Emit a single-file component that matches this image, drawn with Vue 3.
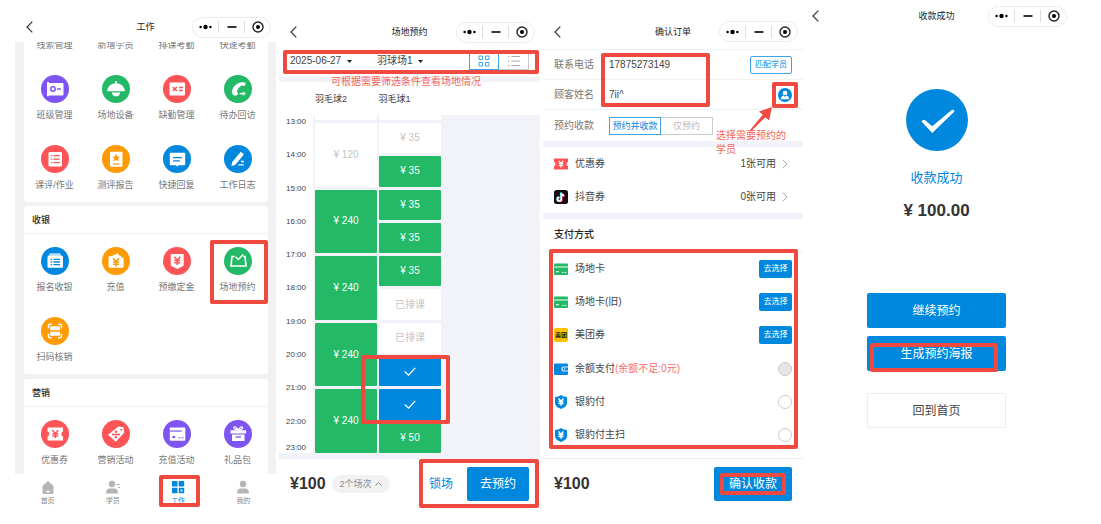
<script setup>
import { h, ref } from 'vue'

const paint = {
  purple: '#7e55f3',
  green: '#23b966',
  red: '#fd5458',
  orange: '#fe9a02',
  blue: '#0088de'
}

const yen = (x, y, c, w = 1.4) =>
  `<path d="M${x - 3} ${y - 4}l3 3.6l3-3.6M${x - 3} ${y - 0.2}h6M${x - 3} ${y + 2}h6M${x} ${y - 0.4}v4.6" fill="none" stroke="${c}" stroke-width="${w}"/>`

const glyphs = {
  classes: `<path d="M6 7h2v1h13.500q1 0 1 1v10.500q0 1-1 1H8v.8H6z" fill="#fff"/><circle cx="12" cy="14" r="2.200" fill="none" stroke="#7e55f3" stroke-width="1.500"/><path d="M16 14h4" stroke="#7e55f3" stroke-width="1.500"/>`,
  venue: `<path d="M13.300 6h1.400v2.200c4.500.4 7.300 3.200 8.300 7.400q0 .7-.8.7H5.800q-.8 0-.8-.7c1-4.200 3.800-7 8.300-7.400z" fill="#fff"/><path d="M10 17.400h8q-.3 3.900-4 3.900t-4-3.900z" fill="#fff"/>`,
  absence: `<rect x="6.500" y="7.500" width="15.500" height="13" rx="1" fill="#fff"/><path d="M9.800 12l4 4M13.800 12l-4 4M16 12.500h3.800M16 15.500h3.800" stroke="#fd5458" stroke-width="1.500"/>`,
  phone: `<path d="M17.300 7.200l4 .3q.9 1.800-.7 3.400l-3-.3q-3.600 2-4.600 5.600l1.200 2.600q-1.600 2.400-4.200 1.800-2-.8-2.200-3.800c.8-5 4.400-8.600 9.500-9.600z" fill="#fff"/><path d="M15.500 18.600h4" stroke="#fff" stroke-width="1.400"/><path d="M18.800 16.400l3.200 2.200-3.200 2.200z" fill="#fff"/>`,
  lesson: `<rect x="7.500" y="7" width="13.500" height="14.500" rx="1.300" fill="#fff"/><path d="M9.800 10.700h1.500M12.500 10.700h6.300M9.800 14.200h1.500M12.500 14.200h6.300M9.800 17.700h1.500M12.500 17.700h6.300" stroke="#fd5458" stroke-width="1.300"/>`,
  report: `<rect x="8" y="6.700" width="12.500" height="15" rx="1.300" fill="#fff"/><path d="M14.200 8.800l1.200 2.600 2.700.3-2 1.900.5 2.700-2.400-1.300-2.400 1.300.5-2.700-2-1.900 2.700-.3z" fill="#fe9a02"/><path d="M11.300 19h6" stroke="#fe9a02" stroke-width="1.300"/>`,
  reply: `<path d="M7.700 7.800h13.600q.9 0 .9.900v10.600q0 .9-.9.900h-5.500L14.300 21.500 12.800 20.200H7.700q-.9 0-.9-.9V8.700q0-.9.900-.9z" fill="#fff"/><path d="M10 12.700h9M10 15.800h7" stroke="#0088de" stroke-width="1.300"/>`,
  diary: `<path d="M16.800 6.800l3.200 2.400-8.600 10.600-4 1.500.8-4.200z" fill="#fff"/><path d="M17 16.500h2.800M14.300 19.800h5.500" stroke="#fff" stroke-width="1.300"/>`,
  cashier: `<path d="M8.500 7.200h11M7.500 9h13" stroke="#fff" stroke-width="1.300"/><rect x="6.500" y="9" width="15.500" height="11.800" rx="1" fill="#fff"/><path d="M9.700 12.300h1.500M12.500 12.300h6.500M9.700 15h1.500M12.500 15h6.500M9.700 17.700h1.500M12.500 17.700h6.500" stroke="#0088de" stroke-width="1.300"/>`,
  topup: `<path d="M6.500 9.500L10 9l5.500-2.800 2 2.600h1.500l.6 1.800h1q1 0 1 1v8.200q0 1-1 1H7.500q-1 0-1-1z" fill="#fff"/>${yen(14, 15.2, '#fe9a02')}`,
  deposit: `<path d="M8.500 7h11.500q.7 0 .7.700v11L14.300 22l-6.500-3.300v-11q0-.7.700-.7z" fill="#fff"/>${yen(14.300, 13.700, '#fd5458')}`,
  booking: `<path d="M10.800 9.500H8L7 19h15L21 9.500h-1.800" fill="none" stroke="#fff" stroke-width="1.700"/><path d="M11.600 9.800l2.700 2.700 4.900-5" fill="none" stroke="#fff" stroke-width="1.400"/>`,
  scan: `<path d="M11.300 7.300H9.300q-1.300 0-1.300 1.300v2.700M17.700 7.300h2q1.300 0 1.300 1.300v2.700M11.300 20.700H9.300q-1.300 0-1.300-1.300v-2.700M17.700 20.700h2q1.300 0 1.300-1.300v-2.700" fill="none" stroke="#fff" stroke-width="1.500" transform="translate(-.5 0)"/><path d="M9.200 9.300h9.800v4H9.200zM9.200 14.700h9.800v4H9.200z" fill="#fff"/>`,
  coupon: `<path d="M6.500 7.500H22v4q-1.700.3-1.700 2.500t1.700 2.500v4H6.500v-4Q8.200 16.200 8.200 14t-1.700-2.500z" fill="#fff"/>${yen(14.300, 14, '#fd5458')}`,
  promo: `<path d="M16.500 6.500l5 .7.700 5.500-8.500 9-7.700-7z" fill="#fff"/><circle cx="19.300" cy="9.700" r="1" fill="#fd5458"/><path d="M10 14.500h8" stroke="#fd5458" stroke-width="1.600"/><circle cx="14" cy="11.700" r="1.200" fill="#fd5458"/><circle cx="14" cy="17.300" r="1.200" fill="#fd5458"/>`,
  card: `<rect x="6.800" y="7.500" width="15.500" height="13.300" rx="1" fill="#fff"/><path d="M6.800 11h12" stroke="#7e55f3" stroke-width="1.200"/><path d="M9 18l.8-2h2.800l-.8 2z" fill="#7e55f3"/><path d="M15.500 17.800h1.900M18.600 17.800h1.800" stroke="#7e55f3"/>`,
  gift: `<path d="M6.500 10.300H22v3.300H6.500zM8 14.600h12.500v6.400H8z" fill="#fff"/><path d="M14.200 10q-4.500-.3-4.300-2.400.7-2.300 4.300 2.400 3.600-4.700 4.300-2.400.2 2.100-4.300 2.400z" fill="none" stroke="#fff" stroke-width="1.300"/><path d="M11.500 17h5.500" stroke="#7e55f3" stroke-width="1.300"/>`
}

const training = [
  { name: '线索管理', icon: 'classes', color: 'purple' },
  { name: '新增学员', icon: 'venue', color: 'green' },
  { name: '排课考勤', icon: 'absence', color: 'red' },
  { name: '快速考勤', icon: 'phone', color: 'green' },
  { name: '班级管理', icon: 'classes', color: 'purple' },
  { name: '场地设备', icon: 'venue', color: 'green' },
  { name: '缺勤管理', icon: 'absence', color: 'red' },
  { name: '待办回访', icon: 'phone', color: 'green' },
  { name: '课评/作业', icon: 'lesson', color: 'red' },
  { name: '测评报告', icon: 'report', color: 'orange' },
  { name: '快捷回复', icon: 'reply', color: 'blue' },
  { name: '工作日志', icon: 'diary', color: 'blue' }
]
const cashier = [
  { name: '报名收银', icon: 'cashier', color: 'blue' },
  { name: '充值', icon: 'topup', color: 'orange' },
  { name: '预缴定金', icon: 'deposit', color: 'red' },
  { name: '场地预约', icon: 'booking', color: 'green', marked: true },
  { name: '扫码核销', icon: 'scan', color: 'orange' }
]
const marketing = [
  { name: '优惠券', icon: 'coupon', color: 'red' },
  { name: '营销活动', icon: 'promo', color: 'red' },
  { name: '充值活动', icon: 'card', color: 'purple' },
  { name: '礼品包', icon: 'gift', color: 'purple' }
]
const sections = [
  { title: '', items: training },
  { title: '收银', items: cashier },
  { title: '营销', items: marketing }
]

const tabs = [
  { name: '首页', art: '<path d="M1.500 6L7 1l5.500 5v7q0 1-1 1h-9q-1 0-1-1z" fill="#b5b5b5"/><path d="M5 11.500h4" stroke="#fff" stroke-width="1.300"/>' },
  { name: '学员', art: '<circle cx="6" cy="4" r="3.200" fill="#b5b5b5"/><path d="M0 13.500q0-5 4-5h4q4 0 4 5z" fill="#b5b5b5"/><path d="M10.500 4.500h3.500M12 7.500h2" stroke="#b5b5b5" stroke-width="1.200"/>' },
  { name: '工作', active: true, art: '<path d="M1 1h5.500v5.500H1zM7.700 1h5.500v5.500H7.700zM1 7.700h5.500v5.500H1z" fill="#0088de"/><rect x="8.700" y="8.700" width="3.600" height="3.600" fill="none" stroke="#0088de" stroke-width="1.800"/>' },
  { name: '我的', art: '<circle cx="7" cy="4" r="3.200" fill="#b5b5b5"/><path d="M1 13.500q0-5 4-5h4q4 0 4 5z" fill="#b5b5b5"/>' }
]

const hours = ['13:00', '14:00', '15:00', '16:00', '17:00', '18:00', '19:00', '20:00', '21:00', '22:00', '23:00']
const courtA = [
  { text: '¥ 120', kind: 'free' },
  { text: '¥ 240', kind: 'open' },
  { text: '¥ 240', kind: 'open' },
  { text: '¥ 240', kind: 'open' },
  { text: '¥ 240', kind: 'open' }
]
const courtB = [
  { text: '¥ 35', kind: 'free' },
  { text: '¥ 35', kind: 'open' },
  { text: '¥ 35', kind: 'open' },
  { text: '¥ 35', kind: 'open' },
  { text: '¥ 35', kind: 'open' },
  { text: '已排课', kind: 'free' },
  { text: '已排课', kind: 'free' },
  { text: '', kind: 'picked', first: true },
  { text: '', kind: 'picked' },
  { text: '¥ 50', kind: 'open' }
]

const cardArt = '<rect y="1.500" width="14" height="11.500" rx="1" fill="#23b966"/><path d="M0 5h14" stroke="#fff"/><path d="M2 9.700h3M8 10.500h1.600M10.600 10.500h1.800" stroke="#d5f5e3" stroke-width="1.200"/>'
const shieldArt = '<path d="M7 0q2.500 1.800 6 2v6q0 3.800-6 6-6-2.200-6-6V2q3.500-.2 6-2z" fill="#0088de"/><path d="M4.500 3.500L7 6.300l2.500-2.800M4.500 6.500h5M4.500 8.500h5M7 6.300v4.500" fill="none" stroke="#fff" stroke-width="1.300"/>'
const vouchers = [
  { name: '优惠券', count: '1张可用', art: '<path d="M0 1.500h14V5q-1.500.2-1.500 2T14 9v3.500H0V9q1.500-.2 1.500-2T0 5z" fill="#fd5458"/><path d="M4.800 4L7 6.500 9.200 4M4.800 6.700h4.400M4.800 8.500h4.400M7 6.500v4" fill="none" stroke="#fff" stroke-width="1.200"/>' },
  { name: '抖音券', count: '0张可用', art: '<rect width="14" height="14" rx="2.500" fill="#170b1a"/><path d="M7.200 2.800v6.400a1.900 1.900 0 1 1-1.900-1.900M7.200 3q.4 2.300 2.900 2.600" transform="translate(-.5 -.3)" fill="none" stroke="#25f4ee" stroke-width="1.500"/><path d="M7.500 2.800v6.400a1.900 1.900 0 1 1-1.900-1.900M7.500 3q.4 2.300 2.900 2.600" transform="translate(.5 .4)" fill="none" stroke="#fe2c55" stroke-width="1.500"/><path d="M7.300 2.800v6.400a1.900 1.900 0 1 1-1.900-1.900M7.300 3q.4 2.300 2.900 2.600" fill="none" stroke="#fff" stroke-width="1.500"/>' }
]
const payments = [
  { name: '场地卡', pick: true, art: cardArt },
  { name: '场地卡(旧)', pick: true, art: cardArt },
  { name: '美团券', pick: true, brand: '美团' },
  { name: '余额支付', note: '(余额不足:0元)', disabled: true, art: '<rect y="1.500" width="14" height="11.500" rx="1" fill="#0088de"/><path d="M14 5h-4q-2 0-2 2t2 2h4" fill="none" stroke="#d8efff" stroke-width="1.200"/><circle cx="10.700" cy="7" r=".7" fill="#fff"/>' },
  { name: '银豹付', art: shieldArt },
  { name: '银豹付主扫', art: shieldArt }
]

const phone = ref('17875273149')
const customer = ref('7ii^')

const TopBar = (props) =>
  h('header', { class: 'top' }, [
    h('button', { class: 'back', 'aria-label': '返回' }, [
      h('svg', { viewBox: '0 0 7 12', width: 7, height: 12, innerHTML: '<path d="M6.300.7L1 6l5.300 5.300" fill="none" stroke="#333" stroke-width="1.200"/>' })
    ]),
    h('h2', props.title),
    h('div', { class: 'capsule' }, [
      h('button', { 'aria-label': '更多' }, [
        h('svg', { viewBox: '0 0 13 12', width: 13, height: 12, innerHTML: '<circle cx="1.600" cy="6" r="1.200"/><circle cx="6.500" cy="6" r="2.200"/><circle cx="11.400" cy="6" r="1.200"/>' })
      ]),
      h('button', { 'aria-label': '最小化' }, [
        h('svg', { viewBox: '0 0 12 12', width: 12, height: 12, innerHTML: '<path d="M1.500 6h9" stroke="#111" stroke-width="1.700"/>' })
      ]),
      h('button', { 'aria-label': '关闭' }, [
        h('svg', { viewBox: '0 0 12 12', width: 12, height: 12, innerHTML: '<circle cx="6" cy="6" r="5" fill="none" stroke="#222" stroke-width="1.400"/><circle cx="6" cy="6" r="2"/>' })
      ])
    ])
  ])
TopBar.props = ['title']
</script>

<template>
  <main class="board">
    <section class="phone work">
      <TopBar title="工作" />
      <div class="scroll">
        <article v-for="s in sections" :key="s.title" class="card" :class="{ scrolled: !s.title }">
          <h3 v-if="s.title">{{ s.title }}</h3>
          <div class="apps">
            <button v-for="a in s.items" :key="a.name" class="app">
              <svg width="28" height="28" viewBox="0 0 28 28" aria-hidden="true">
                <circle cx="14" cy="14" r="14" :fill="paint[a.color]" />
                <g v-html="glyphs[a.icon]"></g>
              </svg>
              <span>{{ a.name }}</span>
              <i v-if="a.marked" class="mark app-mark"></i>
            </button>
          </div>
        </article>
      </div>
      <nav class="tabs">
        <a v-for="t in tabs" :key="t.name" href="#" :class="{ active: t.active }">
          <svg width="14" height="14" viewBox="0 0 14 14" aria-hidden="true" v-html="t.art"></svg>
          <span>{{ t.name }}</span>
          <i v-if="t.active" class="mark tab-mark"></i>
        </a>
      </nav>
    </section>

    <section class="phone venue">
      <TopBar title="场地预约" />
      <div class="filters">
        <label class="pick">
          <select aria-label="日期"><option>2025-06-27</option></select>
          <svg width="5" height="3" viewBox="0 0 5 3"><path d="M0 0h5L2.500 3z" fill="#222" /></svg>
        </label>
        <label class="pick">
          <select aria-label="场地"><option>羽球场1</option></select>
          <svg width="5" height="3" viewBox="0 0 5 3"><path d="M0 0h5L2.500 3z" fill="#222" /></svg>
        </label>
        <div class="views">
          <button class="on" aria-label="宫格">
            <svg width="12" height="12" viewBox="0 0 12 12"><path d="M1 1h3.500v3.500H1zM7.500 1H11v3.500H7.500zM1 7.500h3.500V11H1zM7.500 7.500H11V11H7.500z" fill="none" stroke="#3ea4e6" /></svg>
          </button>
          <button aria-label="列表">
            <svg width="12" height="12" viewBox="0 0 12 12"><path d="M0 1.500h1.500M3.500 1.500H12M0 6h1.500M3.500 6H12M0 10.500h1.500M3.500 10.500H12" stroke="#aaa" /></svg>
          </button>
        </div>
        <i class="mark filter-mark"></i>
        <p class="hint filter-hint">可根据需要筛选条件查看场地情况</p>
      </div>
      <div class="courts"><span>羽毛球2</span><span>羽毛球1</span></div>
      <div class="schedule">
        <div class="hours"><time v-for="t in hours" :key="t">{{ t }}</time></div>
        <div class="lane wide">
          <span class="slot"></span>
          <button v-for="(s, i) in courtA" :key="i" class="slot" :class="s.kind">{{ s.text }}</button>
        </div>
        <div class="lane">
          <span class="slot"></span>
          <button v-for="(s, i) in courtB" :key="i" class="slot" :class="s.kind">
            <svg v-if="s.kind === 'picked'" width="12" height="9" viewBox="0 0 12 9" aria-label="已选"><path d="M.7 4.500l3.800 3.700L11.300.8" fill="none" stroke="#fff" stroke-width="1.200" /></svg>
            <template v-else>{{ s.text }}</template>
            <i v-if="s.first" class="mark slot-mark"></i>
          </button>
        </div>
      </div>
      <footer class="pay">
        <strong>¥100</strong>
        <button class="pill">2个场次
          <svg width="7" height="4" viewBox="0 0 7 4"><path d="M.5 3.500l3-3 3 3" fill="none" stroke="#888" /></svg>
        </button>
        <div class="actions">
          <button class="text">锁场</button>
          <button class="solid">去预约</button>
          <i class="mark action-mark"></i>
        </div>
      </footer>
    </section>

    <section class="phone order">
      <TopBar title="确认订单" />
      <form class="form" @submit.prevent>
        <div class="field">
          <label for="tel">联系电话</label>
          <input id="tel" v-model="phone" />
          <button class="outline">匹配学员</button>
        </div>
        <div class="field">
          <label for="who">顾客姓名</label>
          <input id="who" v-model="customer" />
          <button class="person" aria-label="选择学员">
            <svg width="14" height="14" viewBox="0 0 14 14"><circle cx="7" cy="7" r="7" fill="#0088de" /><circle cx="7" cy="5" r="2.300" fill="#fff" /><path d="M2.800 11.200q.2-3.200 2.900-3.700L7 9l1.300-1.500q2.700.5 2.900 3.700z" fill="#fff" /></svg>
            <i class="mark person-mark"></i>
          </button>
        </div>
        <div class="field mode-field">
          <span id="mode" class="caption">预约收款</span>
          <div class="modes" role="group" aria-labelledby="mode"><button class="on">预约并收款</button><button>仅预约</button></div>
        </div>
        <i class="mark form-mark"></i>
        <svg class="arrow" width="26" height="26" viewBox="0 0 26 26"><path d="M1.500 24.800L14.800 8.800 11 5.600 24 1l-3 13.400-3.600-3.200L2.800 25.600z" fill="#f04a40" /></svg>
        <p class="hint form-hint">选择需要预约的学员</p>
      </form>
      <ul class="rows vouchers">
        <li v-for="v in vouchers" :key="v.name">
          <svg width="14" height="14" viewBox="0 0 14 14" aria-hidden="true" v-html="v.art"></svg>
          <span>{{ v.name }}</span>
          <a href="#">{{ v.count }}
            <svg width="6" height="10" viewBox="0 0 6 10"><path d="M.7.7L5 5 .7 9.300" fill="none" stroke="#aaa" /></svg>
          </a>
        </li>
      </ul>
      <h3 class="methods">支付方式</h3>
      <div class="methods-list">
        <ul class="rows payments">
          <li v-for="p in payments" :key="p.name">
            <b v-if="p.brand" class="brand">{{ p.brand }}</b>
            <svg v-else width="14" height="14" viewBox="0 0 14 14" aria-hidden="true" v-html="p.art"></svg>
            <label :for="p.name">{{ p.name }}<em v-if="p.note">{{ p.note }}</em></label>
            <button v-if="p.pick" :id="p.name" class="choose">去选择</button>
            <input v-else :id="p.name" type="radio" name="method" :disabled="p.disabled" />
          </li>
        </ul>
        <i class="mark payments-mark"></i>
      </div>
      <footer class="pay">
        <strong>¥100</strong>
        <div class="actions">
          <button class="solid confirm">确认收款<i class="mark confirm-mark"></i></button>
        </div>
      </footer>
    </section>

    <section class="phone done">
      <TopBar title="收款成功" />
      <svg class="tick" width="62" height="62" viewBox="0 0 62 62" aria-hidden="true"><circle cx="31" cy="31" r="31" fill="#0088de" /><path d="M15.500 32.500q1.500-2.800 3.700-1.200l7 6L45.800 21q2.300-1 2.700 1.500L26.200 44z" fill="#fff" /></svg>
      <p class="state">收款成功</p>
      <strong class="sum">¥ 100.00</strong>
      <button class="solid">继续预约</button>
      <button class="solid">生成预约海报<i class="mark poster-mark"></i></button>
      <button class="plain">回到首页</button>
    </section>
  </main>
</template>

<style>
body {
  margin: 0;
  background: #fff;
}

.top {
  display: grid;
  grid-template-columns: 1fr auto 1fr;
  align-items: center;
  box-sizing: border-box;
  padding: 0 5px;
}

.top h2 {
  margin: 0;
  font-size: 9px;
  font-weight: 400;
  color: #222;
}

.top .back {
  justify-self: start;
  display: flex;
  padding: 0 6px;
}

.top .capsule {
  justify-self: end;
  display: flex;
  align-items: center;
  box-sizing: border-box;
  width: 79px;
  height: 21px;
  border: 1px solid #ececec;
  border-radius: 11px;
}

.top .capsule button {
  flex: 1;
  display: flex;
  justify-content: center;
  padding: 0;
}

.top .capsule button + button {
  border-left: 1px solid #ddd;
}
</style>

<style scoped>
.board {
  display: grid;
  grid-template-columns: 261fr 261fr 260fr 295fr;
  column-gap: 3px;
  padding-left: 15px;
  min-height: 100vh;
  box-sizing: border-box;
  font-family: "Liberation Sans", "Noto Sans CJK SC", sans-serif;
  font-size: 10px;
  line-height: 14px;
  color: #444;
}

.board :deep(button) {
  font: inherit;
  color: inherit;
  background: none;
  border: 0;
  cursor: pointer;
}

.board :deep(svg) {
  flex: none;
}

.phone {
  display: flex;
  flex-direction: column;
  min-width: 0;
}

.mark {
  position: absolute;
  z-index: 2;
  border: 4px solid #f04a40;
  border-radius: 2px;
  box-sizing: border-box;
  pointer-events: none;
}

.hint {
  position: absolute;
  z-index: 3;
  margin: 0;
  color: #f3655c;
}

/* work */
.work .top {
  height: 42px;
  padding-top: 12px;
}

.scroll {
  height: 432px;
  padding: 0 8px 0 9px;
  overflow: hidden;
  box-sizing: border-box;
  background: #f1f1f1;
}

.card {
  margin-bottom: 5px;
  background: #fff;
  border-radius: 3px;
}

.card.scrolled {
  margin-top: -50px;
  margin-bottom: 4px;
}

.card h3 {
  height: 28px;
  margin: 0;
  padding: 0 8px;
  box-sizing: border-box;
  border-bottom: 1px solid #f1f1f1;
  font-size: 9px;
  line-height: 28px;
  font-weight: 500;
  color: #222;
}

.apps {
  display: grid;
  grid-template-columns: repeat(4, 1fr);
}

.board .app {
  position: relative;
  display: flex;
  flex-direction: column;
  align-items: center;
  gap: 5px;
  padding: 13px 0 10px;
  font-size: 9px;
  color: #777;
}

.app-mark {
  inset: 6px 0 0 3px;
}

.tabs {
  display: grid;
  grid-template-columns: repeat(4, 1fr);
}

.tabs a {
  position: relative;
  display: flex;
  flex-direction: column;
  align-items: center;
  gap: 2px;
  padding-top: 6px;
  font-size: 7px;
  line-height: 10px;
  color: #888;
  text-decoration: none;
}

.tabs a.active {
  color: #0088de;
}

.tab-mark {
  inset: 1px 11px auto 13px;
  height: 32px;
}

/* venue */
.venue .top {
  height: 52px;
  padding-top: 12px;
}

.filters {
  position: relative;
  display: flex;
  align-items: center;
  gap: 25px;
  height: 30px;
  padding: 0 11px 7px;
  box-sizing: border-box;
  border-bottom: 5px solid #f2f3f8;
}

.pick {
  display: flex;
  align-items: center;
  gap: 5px;
}

.pick select {
  appearance: none;
  border: 0;
  padding: 0;
  background: none;
  font: inherit;
  color: #444;
}

.views {
  display: flex;
  margin-left: auto;
}

.board .views button {
  display: flex;
  align-items: center;
  justify-content: center;
  width: 30px;
  height: 18px;
  padding: 0;
  border: 1px solid #ccc;
  border-left: 0;
}

.board .views .on {
  border: 1px solid #3ea4e6;
}

.filter-mark {
  inset: -2px 1px auto 4px;
  height: 24px;
}

.filter-hint {
  top: 23px;
  left: 52px;
  white-space: nowrap;
}

.courts {
  display: grid;
  grid-template-columns: 62fr 62fr 99fr;
  column-gap: 2px;
  height: 33px;
  padding-left: 36px;
  align-items: center;
  font-size: 9px;
}

.schedule {
  display: grid;
  grid-template-columns: 34px 62fr 62fr 97fr;
  column-gap: 2px;
  height: 338px;
  background: #f2f3f8;
  border-bottom: 6px solid #f2f3f8;
}

.lane {
  display: grid;
  grid-template-rows: 5px repeat(10, 1fr);
  row-gap: 3px;
  min-height: 0;
}

.hours {
  display: flex;
  flex-direction: column;
  padding: 2px 0 0 7px;
  background: #fff;
  font-size: 8px;
  line-height: 10px;
}

.hours time {
  flex: 1;
}

.hours time:last-child {
  flex: none;
  margin-top: -7px;
}

.board .slot {
  position: relative;
  display: flex;
  align-items: center;
  justify-content: center;
  min-height: 0;
  padding: 0;
  background: #fff;
  border-radius: 1px;
  color: #c4c4c4;
}

.lane.wide button {
  grid-row-end: span 2;
}

.board .slot.open {
  background: #23b966;
  color: #fff;
}

.board .slot.picked {
  background: #0088de;
}

.slot-mark {
  inset: -1px -9px auto -18px;
  height: 69px;
}

.pay {
  display: flex;
  align-items: center;
  height: 50px;
  padding: 0 11px;
}

.pay strong {
  font-size: 16px;
  color: #333;
}

.board .pill {
  display: flex;
  align-items: center;
  gap: 3px;
  height: 18px;
  margin-left: 6px;
  padding: 0 8px;
  border-radius: 9px;
  background: #f2f2f2;
  font-size: 9px;
  color: #888;
}

.actions {
  position: relative;
  display: flex;
  align-items: center;
  gap: 14px;
  margin-left: auto;
}

.board .text {
  padding: 0;
  font-size: 12px;
  color: #0088de;
}

.board .solid {
  position: relative;
  height: 34px;
  padding: 0 13px;
  border-radius: 2px;
  background: #0088de;
  color: #fff;
  font-size: 12px;
}

.action-mark {
  inset: -8px -10px -7px;
}

/* order */
.order .top {
  height: 50px;
  padding-top: 14px;
  border-bottom: 1px solid #f2f2f2;
}

.form {
  position: relative;
  border-bottom: 6px solid #f2f3f8;
}

.field {
  display: flex;
  align-items: center;
  height: 30px;
  padding: 1px 11px 0;
  box-sizing: border-box;
  border-bottom: 1px solid #f2f2f2;
  color: #777;
}

.mode-field {
  height: 31px;
  border: 0;
}

.field label,
.caption {
  width: 55px;
}

.field input {
  flex: 1;
  min-width: 0;
  padding: 0;
  border: 0;
  outline: 0;
  background: none;
  font: inherit;
  color: #444;
}

.board .outline {
  width: 42px;
  height: 18px;
  padding: 0;
  border: 1px solid #3ea4e6;
  border-radius: 2px;
  font-size: 8px;
  color: #0088de;
}

.board .person {
  position: relative;
  display: flex;
  padding: 0;
}

.person-mark {
  inset: -6px;
}

.modes {
  display: flex;
}

.board .modes button {
  width: 52px;
  height: 18px;
  padding: 0;
  border: 1px solid #ccc;
  border-left: 0;
  font-size: 9px;
  line-height: 14px;
  color: #bbb;
}

.board .modes .on {
  border: 1px solid #3ea4e6;
  color: #0088de;
}

.form-mark {
  top: 3px;
  left: 58px;
  width: 109px;
  height: 54px;
}

.arrow {
  position: absolute;
  z-index: 2;
  top: 56px;
  right: 29px;
}

.form-hint {
  top: 79px;
  left: 173px;
  width: 76px;
}

.rows {
  margin: 0;
  padding: 0;
  list-style: none;
}

.rows li {
  display: flex;
  align-items: center;
  gap: 7px;
  padding: 0 11px;
}

.vouchers {
  border-bottom: 6px solid #f2f3f8;
}

.vouchers li {
  height: 33px;
}

.vouchers a {
  display: flex;
  align-items: center;
  gap: 6px;
  margin-left: auto;
  padding-right: 4px;
  color: inherit;
  text-decoration: none;
}

.methods {
  margin: 0;
  padding: 0 11px;
  border-bottom: 1px solid #f2f2f2;
  font-size: 10px;
  line-height: 32px;
  font-weight: 500;
  color: #222;
}

.methods-list {
  position: relative;
}

.payments {
  display: grid;
  grid-template-rows: repeat(6, 1fr);
  height: 200px;
  padding-bottom: 6px;
  border-bottom: 1px solid #ebebeb;
}

.payments em {
  font-style: normal;
  color: #fd6a6d;
}

.brand {
  width: 14px;
  height: 14px;
  border-radius: 2px;
  background: #fdc300;
  font-size: 6px;
  line-height: 14px;
  text-align: center;
  color: #222;
}

.board .choose {
  width: 33px;
  height: 18px;
  margin-left: auto;
  padding: 0;
  border-radius: 2px;
  background: #0088de;
  font-size: 8px;
  color: #fff;
}

.payments input {
  appearance: none;
  width: 14px;
  height: 14px;
  margin: 0 0 0 auto;
  border: 1px solid #ccc;
  border-radius: 50%;
}

.payments input:disabled {
  background: #e6e6e6;
}

.payments input:checked {
  background: #0088de;
}

.payments-mark {
  inset: -3px 5px 10px 6px;
}

.board .confirm {
  padding: 0 15px;
}

.confirm-mark {
  inset: 6px;
}

/* done */
.done {
  align-items: center;
  padding-right: 34px;
}

.done .top {
  width: 100%;
  height: 32px;
  padding: 0;
}

.tick {
  margin-top: 57px;
}

.state {
  margin: 18px 0 0;
  font-size: 13px;
  line-height: 18px;
  color: #0088de;
}

.sum {
  margin: 14px 0 72px;
  font-size: 17px;
  line-height: 20px;
  color: #333;
}

.board .done > button {
  width: 139px;
  height: 35px;
  margin-bottom: 8px;
  font-size: 12px;
}

.board .done > .plain {
  margin-top: 14px;
  border: 1px solid #ededed;
  border-radius: 2px;
}

.poster-mark {
  inset: 7px 8px -1px 3px;
}
</style>
